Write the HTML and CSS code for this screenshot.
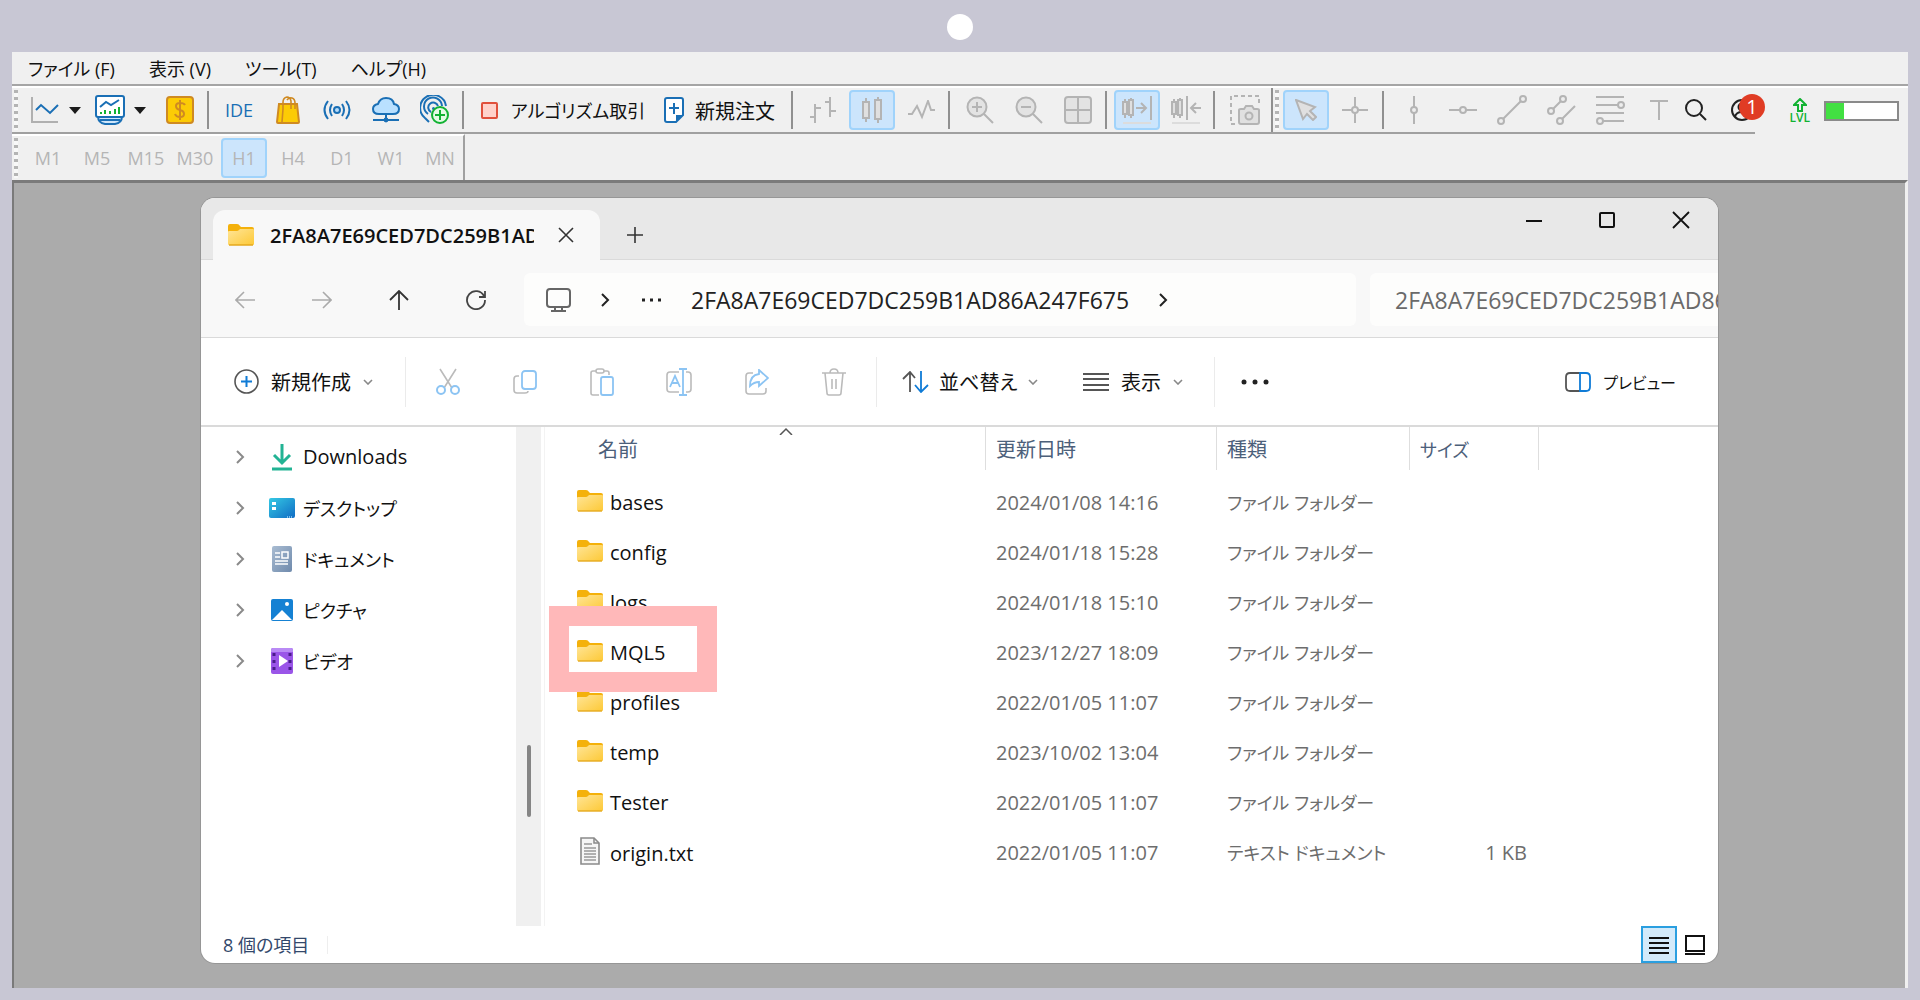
FILE: index.html
```html
<!DOCTYPE html>
<html lang="ja">
<head>
<meta charset="UTF-8">
<title>MetaTrader 5</title>
<link rel="stylesheet" href="styles.css">
</head>
<body>
<!-- shared shapes -->
<svg class="defs" aria-hidden="true">
	<defs>
		<linearGradient id="gold" x1="0" y1="0" x2="1" y2="1"><stop offset="0" stop-color="#ffe597"/><stop offset="1" stop-color="#fdc937"/></linearGradient>
		<linearGradient id="teal" x1="0" y1="0" x2="1" y2="1"><stop offset="0" stop-color="#35c9e4"/><stop offset="1" stop-color="#0f6cc4"/></linearGradient>
		<linearGradient id="steel" x1="0" y1="0" x2="1" y2="1"><stop offset="0" stop-color="#a9bcd2"/><stop offset="1" stop-color="#6f8aac"/></linearGradient>
		<symbol id="folder" viewBox="0 0 26 22">
			<path d="M0 2q0-2 2-2h7q2 0 3 2l1 1h11q2 0 2 2v3H0z" fill="#f4b10b"/>
			<path d="M0 8q0-1 1-1h8q1 0 2-1l1-1h13q1 0 1 1v14q0 1-1 1H1q-1 0-1-1z" fill="url(#gold)"/>
			<path d="M1 21h24" stroke="#e5a91d" stroke-width="1.4"/>
		</symbol>
		<symbol id="chev" viewBox="0 0 10 16"><path d="M1 2l6 6-6 6" fill="none" stroke="currentColor" stroke-width="2"/></symbol>
		<symbol id="down" viewBox="0 0 10 6"><path d="M1 1l4 4 4-4" fill="none" stroke="#888" stroke-width="1.6"/></symbol>
	</defs>
</svg>

<div class="camera"></div>
<div class="app">
	<nav class="menubar">
		<button>ファイル (F)</button>
		<button>表示 (V)</button>
		<button>ツール(T)</button>
		<button>ヘルプ(H)</button>
	</nav>

	<div class="toolrow">
		<div class="tools">
			<span class="grip"></span>
			<button class="tool flush" aria-label="Charts"><svg width="28" height="28" viewBox="0 0 28 28"><path d="M1 1v25h26" stroke="#b0b0b0" stroke-width="2"/><path d="M5 14l5-5 9 8 8-8" stroke="#1a6fb5" stroke-width="2"/></svg></button>
			<button class="arrow" aria-label="Chart list"><svg width="12" height="8"><path d="M0 1h12L6 8z" fill="#1b1b1b"/></svg></button>
			<button class="tool flush" aria-label="Profiles"><svg width="30" height="30" viewBox="0 0 30 30"><path d="M3 21q0 7 7 8h10q7-1 7-8z" fill="#cfe6fa" stroke="#1a6fb5" stroke-width="2"/><path d="M5 25h20" stroke="#1a6fb5" stroke-width="2"/><rect x="1" y="1" width="28" height="21" rx="2" fill="#fff" stroke="#1a6fb5" stroke-width="2"/><path d="M5 12l6-5 5 3 8-5" stroke="#1a6fb5" stroke-width="2"/><path d="M6 19v-2M10 19v-4M15 19v-3M20 19v-5M24 19v-7" stroke="#12b233" stroke-width="2"/></svg></button>
			<button class="arrow wide" aria-label="Profile list"><svg width="12" height="8"><path d="M0 1h12L6 8z" fill="#1b1b1b"/></svg></button>
			<button class="tool" aria-label="Market"><svg width="28" height="28" viewBox="0 0 28 28"><rect x="1" y="1" width="26" height="26" rx="3" fill="#fccb05" stroke="#cf8a22" stroke-width="2"/><path d="M19 9q-1-2-5-2-4 0-4 3 0 3 4 4t4 4q0 3-4 3t-5-3M14 4v20" stroke="#cf8a22" stroke-width="2"/></svg></button>
			<span class="sep"></span>
			<button class="tool ide">IDE</button>
			<button class="tool" aria-label="Shop"><svg width="24" height="28" viewBox="0 0 24 28"><path d="M3 8h18l2 18q0 1-1 1H2q-1 0-1-1z" fill="#fccb05" stroke="#cf8a22" stroke-width="2"/><path d="M7 13V6q0-4 4-5 3 0 4 4v8M11 4q2-3 5-2 3 1 3 5v6M6 26l1-13" stroke="#cf8a22" stroke-width="1.6"/></svg></button>
			<button class="tool" aria-label="Signals"><svg width="28" height="20" viewBox="0 0 28 20"><circle cx="14" cy="10" r="3" fill="#b9dcf8" stroke="#1a6fb5" stroke-width="2"/><path d="M9 4q-4 6 0 12M19 4q4 6 0 12M5 1q-7 9 0 18M23 1q7 9 0 18" stroke="#1a6fb5" stroke-width="2"/></svg></button>
			<button class="tool" aria-label="VPS"><svg width="28" height="26" viewBox="0 0 28 26"><path d="M7 17q-6 0-6-5 0-4 5-5 2-6 8-6 7 0 8 6 5 1 5 5 0 5-6 5z" fill="#b9e0ff" stroke="#1a6fb5" stroke-width="2"/><path d="M14 17v4M1 23h26" stroke="#1a6fb5" stroke-width="2"/><circle cx="14" cy="23" r="2.4" fill="#1a6fb5"/></svg></button>
			<button class="tool" aria-label="Copy trading"><svg width="30" height="30" viewBox="0 0 30 30"><path d="M5 23A13 13 0 1 1 26 11M8 19A9 9 0 1 1 22 11M11 17a5 5 0 1 1 7-6M9 27l-4-4" stroke="#1a6fb5" stroke-width="2"/><circle cx="13.500" cy="13.500" r="1.500" fill="#1a6fb5"/><circle cx="20" cy="20" r="8" fill="#e5fbe5" stroke="#12b233" stroke-width="2"/><path d="M20 15v10M15 20h10" stroke="#12b233" stroke-width="2"/></svg></button>
			<span class="sep"></span>
			<button class="labelled algo"><svg width="17" height="17"><rect x="1" y="1" width="15" height="15" rx="1" fill="#ffd2cb" stroke="#e0503c" stroke-width="2"/></svg>アルゴリズム取引</button>
			<button class="labelled order"><svg width="20" height="26" viewBox="0 0 20 26"><path d="M3 1h14q2 0 2 2v15l-7 7H3q-2 0-2-2V3q0-2 2-2z" fill="#fff" stroke="#1a6fb5" stroke-width="2"/><path d="M12 25v-7h7z" fill="#1a6fb5"/><path d="M10 6v11M5 11h10" stroke="#1a6fb5" stroke-width="2"/></svg>新規注文</button>
			<span class="sep"></span>
			<button class="tool off" aria-label="Bars"><svg width="28" height="28" viewBox="0 0 28 28"><path d="M6 8v19M6 12h6M1 21h5M21 1v20M16 6h5M21 15h6"/></svg></button>
			<button class="tool off on" aria-label="Candles"><svg width="22" height="28" viewBox="0 0 22 28"><path d="M5 2v24M17 1v26"/><rect x="2" y="6" width="6" height="16" fill="#e0e0e0"/><rect x="14" y="4" width="6" height="19" fill="#e0e0e0"/></svg></button>
			<button class="tool off" aria-label="Line"><svg width="28" height="20" viewBox="0 0 28 20"><path d="M1 14h4l5-8 5 11 6-16 3 9h4"/></svg></button>
			<span class="sep"></span>
			<button class="tool off" aria-label="Zoom in"><svg width="28" height="28" viewBox="0 0 28 28"><circle cx="11" cy="11" r="9.500" fill="#e3e3e3"/><path d="M11 6v10M6 11h10M18 18l9 9"/></svg></button>
			<button class="tool off" aria-label="Zoom out"><svg width="28" height="28" viewBox="0 0 28 28"><circle cx="11" cy="11" r="9.500" fill="#e3e3e3"/><path d="M6 11h10M18 18l9 9"/></svg></button>
			<button class="tool off" aria-label="Tile windows"><svg width="28" height="28" viewBox="0 0 28 28"><rect x="1" y="1" width="26" height="26" rx="3" fill="#e3e3e3"/><path d="M14 1v26M1 14h26"/></svg></button>
			<span class="sep"></span>
			<button class="tool off on" aria-label="Scroll to end"><svg width="32" height="30" viewBox="0 0 32 30"><path d="M4 4v19M10 3v20M30 1v24M15 13h10M20 8l5 5-5 5"/><rect x="2" y="7" width="4" height="12" fill="#e0e0e0"/><rect x="8" y="5" width="4" height="15" fill="#e0e0e0"/><path d="M2 28h28" class="faint"/></svg></button>
			<button class="tool off" aria-label="Shift end"><svg width="32" height="30" viewBox="0 0 32 30"><path d="M4 4v19M10 3v20M17 1v24M31 13H21M26 8l-5 5 5 5"/><rect x="2" y="7" width="4" height="12" fill="#e0e0e0"/><rect x="8" y="5" width="4" height="15" fill="#e0e0e0"/><path d="M2 28h28" class="faint"/></svg></button>
			<span class="sep"></span>
			<button class="tool off" aria-label="Screenshot"><svg width="30" height="30" viewBox="0 0 30 30"><path d="M5 29H1V1h28v10" stroke-dasharray="4 3"/><path d="M9 15q0-1 2-1h3l2-3h6l2 3h3q2 0 2 1v12q0 2-2 2H11q-2 0-2-2z" fill="#e0e0e0"/><circle cx="19" cy="21" r="3.500"/></svg></button>
			<span class="sep tall"></span>
			<span class="grip"></span>
			<button class="tool off on" aria-label="Cursor"><svg width="22" height="22" viewBox="0 0 22 22"><path d="M1 1l19 7-5 4 6 6-3 3-6-6-4 5z" fill="#e0e0e0"/></svg></button>
			<button class="tool off" aria-label="Crosshair"><svg width="28" height="28" viewBox="0 0 28 28"><path d="M14 1v26M1 14h26"/><circle cx="14" cy="14" r="3" fill="#eee"/></svg></button>
			<span class="sep"></span>
			<button class="tool off" aria-label="Vertical line"><svg width="10" height="30" viewBox="0 0 10 30"><path d="M5 1v28"/><circle cx="5" cy="15" r="3" fill="#eee"/></svg></button>
			<button class="tool off" aria-label="Horizontal line"><svg width="30" height="10" viewBox="0 0 30 10"><path d="M1 5h28"/><circle cx="15" cy="5" r="3" fill="#eee"/></svg></button>
			<button class="tool off" aria-label="Trend line"><svg width="30" height="30" viewBox="0 0 30 30"><path d="M4 26L26 4"/><circle cx="4" cy="26" r="3" fill="#eee"/><circle cx="26" cy="4" r="3" fill="#eee"/></svg></button>
			<button class="tool off" aria-label="Channel"><svg width="30" height="30" viewBox="0 0 30 30"><path d="M5 16L17 4M14 26l15-15"/><circle cx="5" cy="16" r="3" fill="#eee"/><circle cx="17" cy="4" r="3" fill="#eee"/><circle cx="14" cy="26" r="3" fill="#eee"/></svg></button>
			<button class="tool off" aria-label="Fibonacci"><svg width="30" height="30" viewBox="0 0 30 30"><path d="M1 2h28M1 10h24M1 18h28M5 26h24"/><circle cx="26" cy="10" r="3" fill="#eee"/><circle cx="5" cy="26" r="3" fill="#eee"/></svg></button>
			<button class="tool off" aria-label="Text"><svg width="20" height="20" viewBox="0 0 20 20"><path d="M1 1h18M10 1v19"/></svg></button>
			<div class="account">
				<button aria-label="Search"><svg width="22" height="22" viewBox="0 0 22 22"><circle cx="9" cy="9" r="8" stroke="#222" stroke-width="2"/><path d="M15 15l6 6" stroke="#222" stroke-width="2"/></svg></button>
				<button class="user" aria-label="Notifications"><svg width="22" height="22" viewBox="0 0 22 22"><circle cx="11" cy="11" r="10" stroke="#222" stroke-width="2"/><circle cx="11" cy="8" r="3.500" stroke="#222" stroke-width="2"/><path d="M4 18q1-5 7-5t7 5" stroke="#222" stroke-width="2"/></svg><span class="badge">1</span></button>
			</div>
		</div>
		<div class="level">
			<div class="lvl"><svg width="14" height="14" viewBox="0 0 14 14"><path d="M7 1l6 6H9v6H5V7H1z" stroke="#12b233" stroke-width="2"/></svg>LVL</div>
			<div class="meter"><span></span></div>
		</div>
	</div>

	<div class="periods">
		<span class="grip"></span>
		<button>M1</button>
		<button>M5</button>
		<button>M15</button>
		<button>M30</button>
		<button class="on">H1</button>
		<button>H4</button>
		<button>D1</button>
		<button>W1</button>
		<button>MN</button>
	</div>

	<div class="workspace">
		<div class="window">
			<div class="titlebar">
				<div class="tab">
					<svg width="26" height="22"><use href="#folder"/></svg>
					<span class="tabname">2FA8A7E69CED7DC259B1AD86A247F675</span>
					<button aria-label="Close tab"><svg width="16" height="16"><path d="M1 1l14 14M15 1L1 15" stroke="#333" stroke-width="1.600"/></svg></button>
				</div>
				<button class="plus" aria-label="New tab"><svg width="18" height="18"><path d="M9 1v16M1 9h16" stroke="#333" stroke-width="1.600"/></svg></button>
				<div class="caption">
					<button aria-label="Minimize"><svg width="16" height="16"><path d="M0 9h16" stroke="#111" stroke-width="2"/></svg></button>
					<button aria-label="Maximize"><svg width="16" height="16"><rect x="1" y="1" width="14" height="14" rx="1" stroke="#111" stroke-width="2"/></svg></button>
					<button aria-label="Close"><svg width="18" height="18"><path d="M1 1l16 16M17 1L1 17" stroke="#111" stroke-width="1.800"/></svg></button>
				</div>
			</div>

			<div class="navbar">
				<div class="moves">
					<button aria-label="Back"><svg width="20" height="18" viewBox="0 0 20 18"><path d="M9 1L1 9l8 8M1 9h19" stroke="#aaa" stroke-width="1.6"/></svg></button>
					<button aria-label="Forward"><svg width="20" height="18" viewBox="0 0 20 18"><path d="M11 1l8 8-8 8M19 9H0" stroke="#aaa" stroke-width="1.6"/></svg></button>
					<button aria-label="Up"><svg width="20" height="20" viewBox="0 0 20 20"><path d="M1 10l9-9 9 9M10 1v19" stroke="#333" stroke-width="1.8"/></svg></button>
					<button aria-label="Refresh"><svg width="20" height="20" viewBox="0 0 20 20"><path d="M18 6A9 9 0 1 0 19 10M19 1v6h-6" stroke="#444" stroke-width="1.8"/></svg></button>
				</div>
				<div class="address">
					<svg width="25" height="24" viewBox="0 0 25 24"><rect x="1" y="1" width="23" height="18" rx="3" stroke="#666" stroke-width="2"/><path d="M9 19v3M16 19v3M5 23h15" stroke="#666" stroke-width="2"/></svg>
					<svg class="step" width="10" height="16"><use href="#chev"/></svg>
					<svg width="20" height="4"><path d="M1 2h3M9 2h3M17 2h3" stroke="#222" stroke-width="3"/></svg>
					<a href="#">2FA8A7E69CED7DC259B1AD86A247F675</a>
					<svg width="10" height="16"><use href="#chev"/></svg>
				</div>
				<input class="search" type="text" aria-label="Search" placeholder="2FA8A7E69CED7DC259B1AD86A247F675の検索">
			</div>

			<div class="commands">
				<button class="cmd new"><svg width="25" height="25" viewBox="0 0 25 25"><circle cx="12.500" cy="12.500" r="11.500" stroke="#555" stroke-width="1.6"/><path d="M12.500 7v11M7 12.500h11" stroke="#0f7bd6" stroke-width="2"/></svg>新規作成<svg width="10" height="6"><use href="#down"/></svg></button>
				<div class="edit">
					<button aria-label="Cut"><svg width="24" height="28" viewBox="0 0 24 28"><path d="M4 1l12 19M20 1L8 20" stroke="#bbb" stroke-width="1.6"/><circle cx="5" cy="22" r="4" stroke="#8cc4f3" stroke-width="2"/><circle cx="19" cy="22" r="4" stroke="#8cc4f3" stroke-width="2"/></svg></button>
					<button aria-label="Copy"><svg width="24" height="24" viewBox="0 0 24 24"><path d="M6 6H4q-3 0-3 3v11q0 3 3 3h8q3 0 3-2" stroke="#bbb" stroke-width="1.600"/><rect x="9" y="1" width="14" height="18" rx="3" stroke="#8cc4f3" stroke-width="1.800"/></svg></button>
					<button aria-label="Paste"><svg width="24" height="28" viewBox="0 0 24 28"><path d="M9 27H3q-2 0-2-2V5q0-2 2-2h14q2 0 2 2v2" stroke="#bbb" stroke-width="1.600"/><rect x="6" y="1" width="8" height="4" rx="2" fill="#fff" stroke="#bbb" stroke-width="1.600"/><rect x="11" y="9" width="12" height="18" rx="2" stroke="#8cc4f3" stroke-width="1.800"/></svg></button>
					<button aria-label="Rename"><svg width="26" height="28" viewBox="0 0 26 28"><path d="M13 4H4Q1 4 1 7v14q0 3 3 3h9M20 4h2q3 0 3 3v14q0 3-3 3h-2" stroke="#bbb" stroke-width="1.600"/><path d="M4 19L9 8l5 11M6 15h6M17 1v26M13 1h8M13 27h8" stroke="#8cc4f3" stroke-width="1.800"/></svg></button>
					<button aria-label="Share"><svg width="24" height="26" viewBox="0 0 24 26"><path d="M8 4H4Q1 4 1 7v15q0 3 3 3h14q3 0 3-3v-3" stroke="#bbb" stroke-width="1.600"/><path d="M14 1l9 8-9 8v-4q-5 0-9 4 0-11 9-12z" stroke="#8cc4f3" stroke-width="1.800"/></svg></button>
					<button aria-label="Delete"><svg width="24" height="28" viewBox="0 0 24 28"><path d="M0 5h24M8 5q0-4 4-4t4 4M3 5l2 20q0 2 2 2h10q2 0 2-2l2-20M10 11v10M14 11v10" stroke="#bbb" stroke-width="1.600"/></svg></button>
				</div>
				<button class="cmd sort"><svg width="27" height="22" viewBox="0 0 27 22"><path d="M1 8l7-7 5 6M8 1v20" stroke="#555" stroke-width="1.800"/><path d="M19 0v20M13 14l6 7 7-7" stroke="#0f7bd6" stroke-width="1.800"/></svg>並べ替え<svg width="10" height="6"><use href="#down"/></svg></button>
				<button class="cmd view"><svg width="26" height="18"><path d="M0 1h26M0 6h26M0 12h26M0 17h26" stroke="#555" stroke-width="2"/></svg>表示<svg width="10" height="6"><use href="#down"/></svg></button>
				<button class="more" aria-label="More"><svg width="28" height="6"><circle cx="3" cy="3" r="2.500" fill="#222"/><circle cx="14" cy="3" r="2.500" fill="#222"/><circle cx="25" cy="3" r="2.500" fill="#222"/></svg></button>
				<button class="cmd preview"><svg width="26" height="20" viewBox="0 0 26 20"><path d="M15 1H5Q1 1 1 5v10q0 4 4 4h10" stroke="#555" stroke-width="1.800"/><path d="M15 1h6q4 0 4 4v10q0 4-4 4h-6z" stroke="#0f7bd6" stroke-width="1.800"/></svg>プレビュー</button>
			</div>

			<div class="panes">
				<ul class="tree">
					<li><svg class="open" width="10" height="16"><use href="#chev"/></svg><svg width="26" height="28" viewBox="0 0 26 28"><path d="M13 1v18M5 12l8 8 8-8M3 26h20" stroke="#22b394" stroke-width="3"/></svg><a href="#">Downloads</a></li>
					<li><svg class="open" width="10" height="16"><use href="#chev"/></svg><svg width="26" height="28" viewBox="0 0 26 28"><rect y="4" width="26" height="20" rx="2" fill="url(#teal)"/><path d="M3 8h4v3H3zM3 13h4v3H3z" fill="#fff"/><path d="M18 23h6" stroke="#9cd4f5" stroke-width="1.500" stroke-dasharray="1 1"/></svg><a class="kana" href="#">デスクトップ</a></li>
					<li><svg class="open" width="10" height="16"><use href="#chev"/></svg><svg width="26" height="28" viewBox="0 0 26 28"><rect x="3" y="1" width="20" height="26" rx="2" fill="url(#steel)"/><path d="M6 8h5M6 12h5M6 16h13M6 19h13" stroke="#fff" stroke-width="1.600"/><rect x="13" y="7" width="6" height="6" stroke="#fff" stroke-width="1.500"/></svg><a class="kana" href="#">ドキュメント</a></li>
					<li><svg class="open" width="10" height="16"><use href="#chev"/></svg><svg width="26" height="28" viewBox="0 0 26 28"><rect x="2" y="3" width="22" height="22" rx="2" fill="#1581d3"/><path d="M3 24l10-10 10 10z" fill="#fff"/><circle cx="18" cy="8" r="2" fill="#fff"/></svg><a class="kana" href="#">ピクチャ</a></li>
					<li><svg class="open" width="10" height="16"><use href="#chev"/></svg><svg width="26" height="28" viewBox="0 0 26 28"><rect x="2" y="1" width="22" height="26" rx="2" fill="#9a55e8"/><path d="M2 5V3q0-2 2-2h18q2 0 2 2v2z" fill="#b98af5"/><path d="M5 6v20M21 6v20" stroke="#4a1c8c" stroke-width="3" stroke-dasharray="3 4"/><path d="M10 8l9 6-9 6z" fill="#fff"/></svg><a class="kana" href="#">ビデオ</a></li>
				</ul>
				<div class="scroll"><span></span></div>
				<div class="files">
					<table>
						<colgroup><col class="cname"><col class="cdate"><col class="ctype"><col class="csize"></colgroup>
						<thead>
							<tr>
								<th><div>名前<svg class="sorted" width="14" height="8"><path d="M1 8l6-6 6 6" stroke="#555" stroke-width="1.500"/></svg></div></th>
								<th><div>更新日時</div></th>
								<th><div>種類</div></th>
								<th><div class="kana">サイズ</div></th>
							</tr>
						</thead>
						<tbody>
							<tr><td><svg width="26" height="22"><use href="#folder"/></svg>bases</td><td>2024/01/08 14:16</td><td>ファイル フォルダー</td><td></td></tr>
							<tr><td><svg width="26" height="22"><use href="#folder"/></svg>config</td><td>2024/01/18 15:28</td><td>ファイル フォルダー</td><td></td></tr>
							<tr><td><svg width="26" height="22"><use href="#folder"/></svg>logs</td><td>2024/01/18 15:10</td><td>ファイル フォルダー</td><td></td></tr>
							<tr><td class="marked"><svg width="26" height="22"><use href="#folder"/></svg>MQL5</td><td>2023/12/27 18:09</td><td>ファイル フォルダー</td><td></td></tr>
							<tr><td><svg width="26" height="22"><use href="#folder"/></svg>profiles</td><td>2022/01/05 11:07</td><td>ファイル フォルダー</td><td></td></tr>
							<tr><td><svg width="26" height="22"><use href="#folder"/></svg>temp</td><td>2023/10/02 13:04</td><td>ファイル フォルダー</td><td></td></tr>
							<tr><td><svg width="26" height="22"><use href="#folder"/></svg>Tester</td><td>2022/01/05 11:07</td><td>ファイル フォルダー</td><td></td></tr>
							<tr><td><svg class="txt" width="26" height="28" viewBox="0 0 26 28"><path d="M4 1h13l5 5v21H4z" fill="#f6f6f6" stroke="#8b8b8b" stroke-width="1.600"/><path d="M17 1v5h5" stroke="#8b8b8b" stroke-width="1.500"/><path d="M7 7h8M7 11h12M7 14h12M7 17h12M7 20h12M7 23h12" stroke="#999" stroke-width="1.500"/></svg>origin.txt</td><td>2022/01/05 11:07</td><td>テキスト ドキュメント</td><td>1 KB</td></tr>
						</tbody>
					</table>
				</div>
			</div>

			<div class="statusbar">
				<span class="count">8 個の項目</span>
				<button class="details" aria-label="Details view"><svg width="20" height="18"><path d="M0 2h20M0 7h20M0 12h20M0 17h20" stroke="#111" stroke-width="2"/></svg></button>
				<button class="thumbs" aria-label="Thumbnail view"><svg width="20" height="20"><rect x="1" y="1" width="18" height="15" stroke="#111" stroke-width="2" fill="#fff"/><path d="M0 19h20" stroke="#111" stroke-width="2"/></svg></button>
			</div>
		</div>
	</div>
</div>
</body>
</html>
```

FILE: styles.css
```css
*, *::after {
	box-sizing: border-box;
	margin: 0;
	padding: 0;
}
body {
	display: flex;
	flex-direction: column;
	min-height: 100vh;
	padding: 0 12px 12px;
	background: #c8c7d4;
	color: #111;
	font-family: "Open Sans", "Noto Sans CJK JP", sans-serif;
	font-size: 20px;
	font-feature-settings: "palt";
}
button {
	display: flex;
	align-items: center;
	justify-content: center;
	border: 0;
	background: none;
	color: inherit;
	font: inherit;
	white-space: nowrap;
}
a {
	color: inherit;
	text-decoration: none;
}
svg {
	flex: none;
	fill: none;
}
.defs {
	position: absolute;
	width: 0;
	height: 0;
}
.kana {
	font-size: 18px;
}
.camera {
	width: 26px;
	height: 26px;
	margin: 14px auto 12px;
	border-radius: 50%;
	background: #fff;
}
.app {
	display: flex;
	flex: 1;
	flex-direction: column;
	background: #f0f0f0;
}

/* menu and toolbars */
.menubar {
	display: flex;
	gap: 34px;
	height: 34px;
	padding-left: 16px;
	border-bottom: 2px solid #a5a5a5;
	font-size: 18px;
}
.toolrow {
	display: flex;
	height: 48px;
	border-top: 2px solid #fff;
}
.tools {
	display: flex;
	flex: 1;
	align-items: center;
	border-bottom: 2px solid #a0a0a0;
}
.grip {
	flex: none;
	width: 4px;
	height: 40px;
	margin: 0 4px 0 2px;
	background: repeating-linear-gradient(#b4b4b4 0 3px, #f8f8f8 3px 7px);
}
.tool {
	flex: none;
	width: 46px;
	height: 40px;
	margin-right: 3px;
	border: 1px solid transparent;
	border-radius: 4px;
}
.flush {
	margin-right: 0;
}
.arrow {
	width: 19px;
	height: 40px;
	justify-content: flex-start;
	padding-left: 1px;
}
.arrow.wide {
	width: 24px;
}
.ide {
	color: #1a6fb5;
	font-size: 18px;
}
.off svg {
	stroke: #b4b4b4;
	stroke-width: 2;
}
.off .faint {
	stroke: #dcdcdc;
}
.on {
	border: 2px solid #a0d3fb;
	background: #cce5fc;
}
.sep {
	flex: none;
	width: 2px;
	height: 38px;
	margin: 0 7px 0 1px;
	background: #909090;
}
.sep.tall {
	height: 44px;
	margin: 0;
}
.labelled {
	justify-content: flex-start;
	height: 40px;
	padding-left: 10px;
}
.algo {
	gap: 13px;
	width: 183px;
	font-size: 18px;
}
.order {
	gap: 11px;
	width: 136px;
}
.account {
	display: flex;
	gap: 24px;
	margin-left: auto;
	padding-right: 2px;
}
.user {
	position: relative;
	width: 22px;
	height: 26px;
}
.badge {
	position: absolute;
	top: -3px;
	left: 8px;
	width: 26px;
	height: 26px;
	border-radius: 50%;
	background: #e03c24;
	color: #fff;
	font-size: 20px;
	line-height: 26px;
}
.level {
	display: flex;
	align-items: center;
	justify-content: flex-end;
	gap: 14px;
	width: 156px;
	padding-right: 9px;
}
.lvl {
	display: flex;
	flex-direction: column;
	align-items: center;
	color: #12b233;
	font-size: 12px;
	font-weight: 600;
	line-height: 12px;
}
.meter {
	width: 75px;
	height: 20px;
	border: 2px solid #8a8a8a;
	background: #fff;
}
.meter span {
	display: block;
	width: 26%;
	height: 100%;
	background: #42e042;
}
.periods {
	display: flex;
	align-items: center;
	align-self: flex-start;
	gap: 3px;
	height: 46px;
	border-top: 2px solid #fff;
	border-right: 2px solid #a0a0a0;
	color: #b5b5b5;
	font-size: 18px;
}
.periods button {
	width: 46px;
	height: 40px;
	border-radius: 4px;
}

.workspace {
	flex: 1;
	padding: 15px 187px 24px;
	border: solid #7a7a7a;
	border-width: 3px 0 0 2px;
	border-right: 3px solid #f0f0f0;
	background: #ababab;
}

/* explorer window */
.window {
	overflow: hidden;
	border-radius: 14px;
	background: #fff;
	box-shadow: 0 0 0 1px #969696;
}
.titlebar {
	display: flex;
	height: 62px;
	padding: 12px 0 0 12px;
	border-bottom: 1px solid #dadada;
	background: #e8e8e8;
}
.tab {
	display: flex;
	align-items: center;
	width: 387px;
	height: 50px;
	padding-left: 15px;
	border-radius: 12px 12px 0 0;
	background: #f8f8f8;
}
.tabname {
	width: 264px;
	margin: 0 24px 0 16px;
	overflow: hidden;
	font-weight: 600;
	white-space: nowrap;
}
.plus {
	width: 70px;
	height: 50px;
}
.caption {
	display: flex;
	gap: 57px;
	height: 20px;
	margin: 0 28px 0 auto;
}
.navbar {
	display: flex;
	height: 78px;
	padding: 13px 0 11px;
	border-bottom: 1px solid #dadada;
	background: #f8f8f8;
}
.moves {
	display: flex;
	gap: 57px;
	width: 323px;
	padding-left: 34px;
}
.address {
	display: flex;
	flex: 1;
	align-items: center;
	gap: 30px;
	margin-right: 14px;
	padding-left: 22px;
	border-radius: 6px;
	background: #fdfdfc;
	color: #222;
	font-size: 23px;
}
.search {
	width: 348px;
	padding-left: 25px;
	border: 0;
	border-radius: 6px 0 0 6px;
	background: #fdfdfc;
	font: inherit;
	font-size: 23px;
}
.search::placeholder {
	color: #6a6a6a;
	opacity: 1;
}
.commands {
	display: flex;
	align-items: center;
	height: 89px;
	border-bottom: 2px solid #dadada;
}
.cmd {
	justify-content: flex-start;
	gap: 12px;
	height: 50px;
}
.new {
	width: 204px;
	padding-left: 33px;
}
.edit {
	display: flex;
	justify-content: space-between;
	width: 472px;
	height: 50px;
	padding: 0 30px;
	border: solid #ebebeb;
	border-width: 0 1px;
}
.sort {
	gap: 10px;
	width: 182px;
	padding-left: 25px;
}
.view {
	width: 155px;
	padding-left: 24px;
}
.more {
	width: 80px;
	height: 50px;
	border-left: 1px solid #ebebeb;
}
.preview {
	margin-left: auto;
	padding-right: 42px;
	font-size: 16px;
}
.panes {
	display: flex;
}
.tree {
	width: 315px;
	padding-top: 4px;
	list-style: none;
}
.tree li {
	display: flex;
	align-items: center;
	height: 51px;
	padding-left: 35px;
}
.tree a {
	margin-left: 8px;
}
.open {
	margin-right: 23px;
	color: #8a8a8a;
}
.scroll {
	width: 25px;
	margin-right: 3px;
	background: #f0f0f0;
}
.scroll span {
	display: block;
	width: 4px;
	height: 72px;
	margin: 318px auto 0;
	border-radius: 2px;
	background: #858585;
}
.files {
	flex: 1;
	height: 499px;
	border-left: 1px solid #f3f3f3;
}
table {
	width: 994px;
	border-collapse: collapse;
	table-layout: fixed;
}
.cname {
	width: 441px;
}
.cdate {
	width: 231px;
}
.ctype {
	width: 193px;
}
.csize {
	width: 129px;
}
th {
	height: 50px;
	color: #4c607a;
	font-weight: 400;
	text-align: left;
	vertical-align: top;
}
th div {
	position: relative;
	height: 43px;
	padding-left: 10px;
	border-right: 1px solid #dedede;
	line-height: 46px;
}
th:first-child div {
	padding-left: 53px;
}
.sorted {
	position: absolute;
	top: 0;
	left: 234px;
}
td {
	height: 50px;
	padding-left: 10px;
	color: #6d6d6d;
	white-space: nowrap;
}
td:first-child {
	padding-left: 32px;
	color: #111;
}
td:nth-child(3) {
	font-size: 18px;
}
td:last-child {
	padding-right: 12px;
	text-align: right;
}
td svg {
	margin-right: 7px;
	vertical-align: -2px;
}
td .txt {
	vertical-align: -4px;
}
/* callout frame round the folder to open */
.marked {
	position: relative;
}
.marked::after {
	content: "";
	position: absolute;
	top: -21px;
	left: 4px;
	width: 168px;
	height: 86px;
	border: 20px solid #ffb8b9;
}
.statusbar {
	display: flex;
	align-items: center;
	height: 37px;
	padding: 0 5px 0 22px;
	color: #33486b;
	font-size: 18px;
}
.count {
	margin-right: auto;
	padding-right: 18px;
	border-right: 1px solid #eee;
	line-height: 18px;
}
.details {
	width: 36px;
	height: 37px;
	border: 2px solid #2a9fe0;
	background: #d3eafa;
}
.thumbs {
	width: 36px;
	height: 37px;
}
```
